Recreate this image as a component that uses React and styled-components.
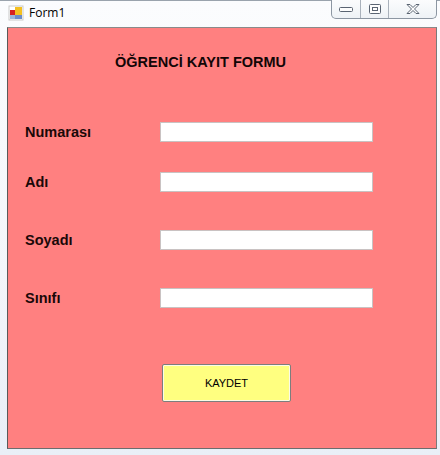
import React from "react";
import styled, { createGlobalStyle } from "styled-components";

const GlobalStyle = createGlobalStyle`
  html, body {
    margin: 0;
    padding: 0;
    background: #ffffff;
  }
  body {
    font-family: "Liberation Sans", Arial, sans-serif;
  }
`;

const fields = [
  { label: "Numarası", top: 52 },
  { label: "Adı", top: 30 },
  { label: "Soyadı", top: 38 },
  { label: "Sınıfı", top: 38 },
];

const App = () => {
  return (
    <>
      <GlobalStyle />
      <Window>
        <TitleBar>
          <AppIcon viewBox="0 0 16 16">
            <rect x="1" y="1" width="14" height="14" fill="#ffffff" stroke="#c9c9c9" />
            <rect x="2" y="5" width="5" height="5" fill="#d62020" />
            <rect x="7" y="2" width="7" height="8" fill="#f4c020" />
            <rect x="2" y="10" width="5" height="4" fill="#9db4d8" />
            <rect x="7" y="10" width="7" height="4" fill="#6c8cc8" />
          </AppIcon>
          <Caption>Form1</Caption>
          <CaptionButtons>
            <CapButton $w={28}>
              <svg width="16" height="10" viewBox="0 0 16 10">
                <rect x="1.5" y="3.5" width="13" height="4" rx="1" fill="#fdfdfd" stroke="#5a6472" />
              </svg>
            </CapButton>
            <CapButton $w={27}>
              <svg width="14" height="12" viewBox="0 0 14 12">
                <rect x="1.5" y="1.5" width="11" height="9" rx="1" fill="#fdfdfd" stroke="#5a6472" />
                <rect x="4.5" y="4.5" width="5" height="3" fill="none" stroke="#5a6472" />
              </svg>
            </CapButton>
            <CapButton $w={47} $last>
              <svg width="16" height="12" viewBox="0 0 16 12">
                <path
                  d="M2 1.5h3l3 3 3-3h3l-4.5 4.5 4.5 4.5h-3l-3-3-3 3h-3l4.5-4.5z"
                  fill="#fdfdfd"
                  stroke="#5a6472"
                  strokeLinejoin="round"
                />
              </svg>
            </CapButton>
          </CaptionButtons>
        </TitleBar>
        <Client>
          <Heading>ÖĞRENCİ KAYIT FORMU</Heading>
          {fields.map((f) => (
            <Row key={f.label} $top={f.top}>
              <Label>{f.label}</Label>
              <TextBox type="text" />
            </Row>
          ))}
          <SaveButton>KAYDET</SaveButton>
        </Client>
      </Window>
    </>
  );
};

export default App;

const Window = styled.div`
  width: 440px;
  height: 455px;
  box-sizing: border-box;
  display: flex;
  flex-direction: column;
  background: linear-gradient(180deg, #fbfcfe 0%, #f3f6fa 60%, #e9eff7 100%);
  border-top: 1px solid #9aa3ad;
`;

const TitleBar = styled.div`
  height: 26px;
  display: flex;
  align-items: flex-start;
  padding-left: 8px;
`;

const AppIcon = styled.svg`
  width: 16px;
  height: 16px;
  margin-top: 4px;
`;

const Caption = styled.div`
  font-family: "Open Sans", "Liberation Sans", sans-serif;
  font-size: 12px;
  color: #000;
  margin-left: 5px;
  margin-top: 4px;
  line-height: 16px;
`;

const CaptionButtons = styled.div`
  margin-left: auto;
  margin-right: 3px;
  margin-top: -1px;
  display: flex;
  height: 18px;
  border: 1px solid #8c96a2;
  border-top: none;
  border-radius: 0 0 5px 5px;
  background: linear-gradient(180deg, #fbfcfd 0%, #eef2f6 100%);
  overflow: hidden;
`;

const CapButton = styled.div`
  width: ${(p) => p.$w}px;
  display: flex;
  align-items: center;
  justify-content: center;
  border-right: ${(p) => (p.$last ? "none" : "1px solid #a9b1bb")};
`;

const Client = styled.div`
  flex: 1;
  margin: 0 3px 6px 7px;
  background: #ff8080;
  border: 1px solid #6d6d6d;
  border-color: #8a8a8a #7a7a7a #6d6d6d #5a5a5a;
  display: flex;
  flex-direction: column;
  align-items: flex-start;
`;

const Heading = styled.div`
  margin-top: 26px;
  padding-left: 107px;
  font-size: 14.5px;
  line-height: 16px;
  font-weight: bold;
  color: #120606;
`;

const Row = styled.div`
  margin-top: ${(p) => p.$top}px;
  padding-left: 17px;
  display: flex;
  align-items: center;
  height: 20px;
`;

const Label = styled.div`
  width: 135px;
  font-size: 14.5px;
  font-weight: bold;
  color: #1a0808;
`;

const TextBox = styled.input`
  box-sizing: border-box;
  width: 213px;
  height: 20px;
  margin: 0;
  padding: 0 3px;
  border: 1px solid #c9c2c2;
  background: #ffffff;
  outline: none;
`;

const SaveButton = styled.button`
  margin-top: 56px;
  margin-left: 154px;
  width: 129px;
  height: 38px;
  box-sizing: border-box;
  background: #ffff80;
  border: 1px solid #7d7d7d;
  border-radius: 2px;
  box-shadow: inset 0 0 0 1px #fbfbe8;
  font-family: "Liberation Sans", Arial, sans-serif;
  font-size: 11px;
  color: #000;
  padding: 0;
`;
